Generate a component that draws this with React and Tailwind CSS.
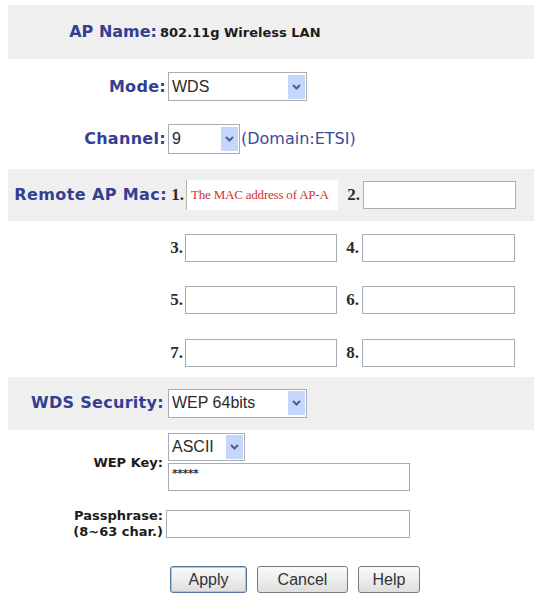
const label = "font-['DejaVu_Sans',Verdana,sans-serif] font-bold text-[16px] text-[#323f92] leading-none";
const num = "font-['Liberation_Serif',serif] font-bold text-[17px] text-[#2b2b2b] leading-none text-right";
const field = "h-[28px] bg-white border border-[#a7adb2]";

function Arrow() {
  return (
    <div className="w-[17px] h-[24px] bg-[#c5d6fb] flex items-center justify-center">
      <svg width="9" height="6" viewBox="0 0 9 6">
        <polyline points="1,1 4.5,4.5 8,1" fill="none" stroke="#4a5f8c" strokeWidth="2" />
      </svg>
    </div>
  );
}

function Select({ value, className }) {
  return (
    <div className={`flex items-center justify-between bg-white border border-[#a7adb2] pl-[3px] pr-[1px] ${className}`}>
      <span className="font-['Liberation_Sans',Arial,sans-serif] text-[16px] text-[#2a2a2a] leading-none">{value}</span>
      <Arrow />
    </div>
  );
}

function MacRow({ a, b, first }) {
  return (
    <div className="flex items-center">
      <span className={`${num} w-[17px]`}>{a}.</span>
      {first ? (
        <div className="ml-[2px] w-[152px] h-[30px] bg-white border-l border-[#b5b5b5] flex items-center pl-[4px]">
          <span className="font-['Liberation_Serif',serif] text-[13px] text-[#d2322d] leading-none whitespace-nowrap tracking-[-0.2px]">
            The MAC address of AP-A
          </span>
        </div>
      ) : (
        <div className={`${field} ml-[2px] w-[152px]`} />
      )}
      <span className={`${num} w-[22px]`}>{b}.</span>
      <div className={`${field} ml-[3px] w-[153px]`} />
    </div>
  );
}

function Button({ children, primary, w }) {
  return (
    <button
      className={`h-[27px] ${w} rounded-[3px] border bg-gradient-to-b from-[#fbfbfb] to-[#dedede] font-['Liberation_Sans',Arial,sans-serif] text-[16px] text-[#333] leading-none ${
        primary ? 'border-[#5578a3] shadow-[inset_0_0_0_1px_#a9c4e4]' : 'border-[#7a7a7a]'
      }`}
    >
      {children}
    </button>
  );
}

export default function App() {
  return (
    <div className="w-[534px] h-[593px] bg-white pt-[5px] flex flex-col overflow-hidden">
      {/* AP name */}
      <div className="ml-[8px] h-[55px] bg-[#efefef] flex items-center">
        <span className={`${label} w-[149px] text-right`}>AP Name:</span>
        <span className="ml-[3px] font-['DejaVu_Sans',Verdana,sans-serif] font-bold text-[13px] text-[#1c1c1c] leading-none">
          802.11g Wireless LAN
        </span>
      </div>

      {/* Mode */}
      <div className="mt-[13px] flex items-center">
        <span className={`${label} tracking-[0.3px] w-[166px] text-right`}>Mode:</span>
        <Select value="WDS" className="ml-[2px] w-[139px] h-[29px]" />
      </div>

      {/* Channel */}
      <div className="mt-[23px] flex items-center">
        <span className={`${label} tracking-[0.3px] w-[166px] text-right`}>Channel:</span>
        <Select value="9" className="ml-[2px] w-[72px] h-[30px]" />
        <span className="ml-[1px] font-['DejaVu_Sans',Verdana,sans-serif] text-[16px] text-[#3a4aa0] leading-none">
          (Domain:ETSI)
        </span>
      </div>

      {/* Remote AP MAC list */}
      <div className="mt-[15px] ml-[8px] h-[52px] bg-[#efefef] flex items-center">
        <span className={`${label} tracking-[0.4px] w-[159px] text-right`}>Remote AP Mac:</span>
        <MacRow a={1} b={2} first />
      </div>
      <div className="mt-[13px] flex items-center pl-[166px]">
        <MacRow a={3} b={4} />
      </div>
      <div className="mt-[24px] flex items-center pl-[166px]">
        <MacRow a={5} b={6} />
      </div>
      <div className="mt-[25px] flex items-center pl-[166px]">
        <MacRow a={7} b={8} />
      </div>

      {/* Security */}
      <div className="mt-[10px] ml-[8px] h-[54px] bg-[#efefef] flex items-center">
        <span className={`${label} tracking-[0.3px] w-[156px] text-right`}>WDS Security:</span>
        <Select value="WEP 64bits" className="ml-[4px] w-[139px] h-[29px]" />
      </div>

      <div className="mt-[3px] flex items-center">
        <span className="w-[163px] text-right font-['DejaVu_Sans',Verdana,sans-serif] font-bold text-[13px] text-[#1c1c1c] leading-none">
          WEP Key:
        </span>
        <div className="ml-[5px] flex flex-col gap-[2px]">
          <Select value="ASCII" className="w-[77px] h-[28px]" />
          <div className={`${field} w-[242px] pl-[3px] pt-[4px]`}>
            <span className="block font-['DejaVu_Sans',sans-serif] font-bold text-[11px] text-[#333] leading-none tracking-[-0.5px]">
              *****
            </span>
          </div>
        </div>
      </div>

      <div className="mt-[17px] flex items-center">
        <span className="w-[163px] text-right font-['DejaVu_Sans',Verdana,sans-serif] font-bold text-[13px] text-[#1c1c1c] leading-[16px]">
          Passphrase:
          <br />
          (8~63 char.)
        </span>
        <div className={`${field} ml-[3px] w-[244px] h-[27px]`} />
      </div>

      <div className="mt-[26px] ml-[170px] flex gap-[10px]">
        <Button primary w="w-[77px]">Apply</Button>
        <Button w="w-[91px]">Cancel</Button>
        <Button w="w-[62px]">Help</Button>
      </div>
    </div>
  );
}
